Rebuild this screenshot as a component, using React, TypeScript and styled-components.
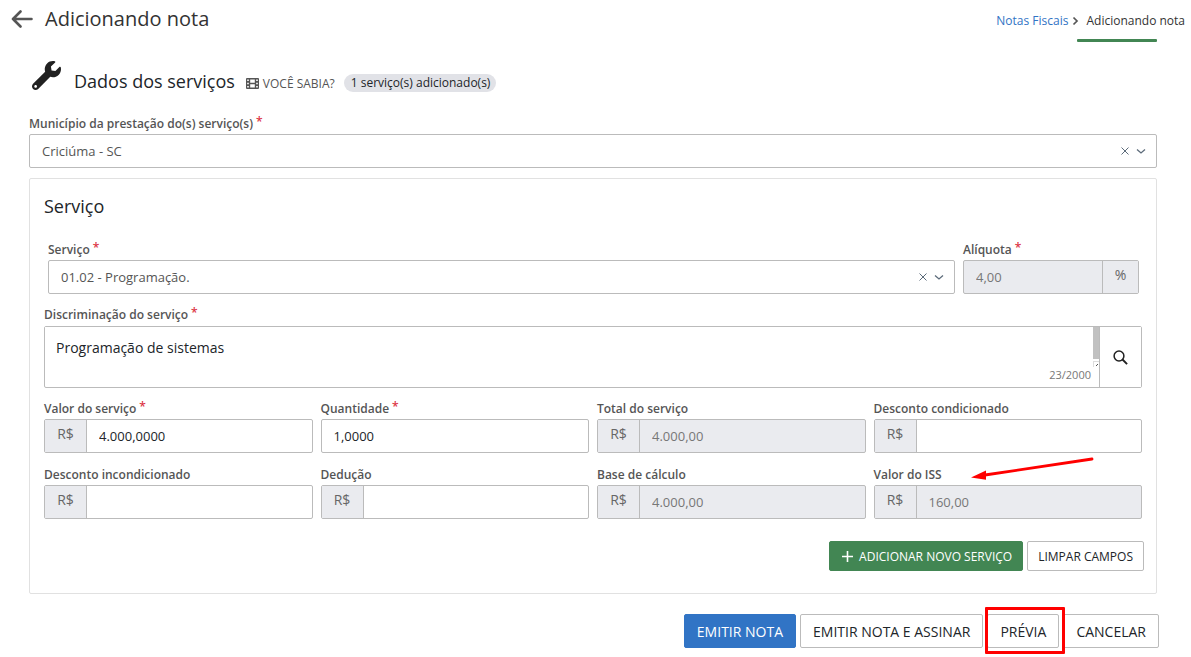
import React from 'react';
import styled, { createGlobalStyle, css } from 'styled-components';
import { FaWrench } from 'react-icons/fa';

const Global = createGlobalStyle`
  *, *::before, *::after { box-sizing: border-box; }
  body { margin: 0; background: #fff; color: #212529; font-family: 'Open Sans', 'Noto Sans', sans-serif; font-size: 14px; }
  button, input, select, textarea { font: inherit; color: inherit; margin: 0; border-radius: 0; }
`;

const BORDER = '#bbbbbb';
const GREY = '#eaebef';

const Header = styled.header`
  display: flex;
  justify-content: space-between;
  align-items: flex-start;
  padding: 6px 6px 0 11px;
  height: 42px;
`;
const TitleGroup = styled.div`
  display: flex;
  align-items: center;
  gap: 12px;
`;
const BackButton = styled.button`
  display: flex;
  padding: 0;
  border: 0;
  background: none;
  color: #555;
  cursor: pointer;
`;
const PageTitle = styled.h1`
  margin: 0;
  font-size: 20px;
  line-height: 26px;
  font-weight: 400;
  color: #333;
`;
const Breadcrumb = styled.nav`
  display: flex;
  flex-direction: column;
  font-size: 12px;
  line-height: 30px;
`;
const Crumbs = styled.div`
  display: flex;
  align-items: center;
  height: 30px;
  color: #333;
  a { color: #3174c5; text-decoration: none; }
  svg { margin: 0 7px 0 4px; color: #555; }
`;
const ActiveBar = styled.div`
  width: 80px;
  height: 3px;
  margin-top: 3px;
  margin-right: 28px;
  align-self: flex-end;
  border-radius: 1px;
  background: #428653;
`;

const Main = styled.main`
  padding: 19px 34px 9px 29px;
`;
const SectionHead = styled.div`
  display: flex;
  align-items: center;
  height: 40px;
  padding-left: 3px;
  margin-bottom: 15px;
`;
const SectionIcon = styled.span`
  display: flex;
  align-self: flex-start;
  margin-right: 13px;
`;
const Heading = styled.h2`
  margin: 0;
  font-size: 18px;
  line-height: 26px;
  font-weight: 400;
`;
const VideoLink = styled.a`
  display: flex;
  align-items: center;
  gap: 4px;
  margin: 4px 9px 0 11px;
  font-size: 12px;
  color: #555;
  text-decoration: none;
`;
const Pill = styled.span`
  padding: 0 6px 0 7px;
  border-radius: 9px;
  background: #e1e2e7;
  font-size: 12px;
  line-height: 18px;
  margin-top: 4px;
`;

const FieldBox = styled.div`
  position: relative;
  min-width: 0;
`;
const Label = styled.label`
  display: block;
  height: 18px;
  font-size: 12px;
  line-height: 16px;
  font-weight: 600;
  color: #555;
  white-space: nowrap;
`;
const Star = styled.span`
  margin-left: 3px;
  color: #dc3545;
  position: relative;
  top: -2px;
`;
const Control = styled.div<{ $grey?: boolean }>`
  display: flex;
  height: 34px;
  border: 1px solid ${BORDER};
  border-radius: 2px;
  background: ${p => (p.$grey ? GREY : '#fff')};
`;
const AddOn = styled.span<{ $end?: boolean }>`
  flex: none;
  width: ${p => (p.$end ? 36 : 42)}px;
  line-height: 28px;
  text-align: center;
  color: #666;
  background: ${GREY};
  ${p => (p.$end ? css`border-left: 1px solid ${BORDER};` : css`border-right: 1px solid ${BORDER};`)}
`;
const Input = styled.input`
  flex: 1;
  min-width: 0;
  width: 100%;
  padding: 0 12px;
  border: 0;
  outline: 0;
  background: transparent;
  font-size: 13px;
  color: #212529;
  &:disabled { color: #777; }
`;
const Select = styled.select`
  flex: 1;
  min-width: 0;
  padding: 0 12px;
  border: 0;
  outline: 0;
  appearance: none;
  background: transparent;
  font-size: 13px;
  color: #555;
`;
const SelectTools = styled.span`
  display: flex;
  align-items: center;
  gap: 6px;
  padding-right: 10px;
  color: #5c6b7a;
`;
const IconButton = styled.button`
  display: flex;
  padding: 0;
  border: 0;
  background: none;
`;

const Panel = styled.section`
  margin-top: 10px;
  padding: 14px 14px 22px;
  border: 1px solid #e1e1e1;
  border-radius: 2px;
`;
const ServiceRow = styled.div`
  display: grid;
  grid-template-columns: 1fr 176px;
  gap: 8px;
  margin: 23px 3px 13px 4px;
`;
const ValueGrid = styled.div`
  display: grid;
  grid-template-columns: repeat(4, minmax(0, 1fr));
  gap: 14px 8px;
  margin-top: 13px;
`;
const AreaControl = styled.div`
  display: flex;
  height: 62px;
  margin-top: 1px;
  border: 1px solid ${BORDER};
  border-radius: 2px;
`;
const AreaBody = styled.div`
  flex: 1;
  display: flex;
  flex-direction: column;
`;
const AreaTop = styled.div`
  display: flex;
  height: 40px;
`;
const TextArea = styled.textarea`
  flex: 1;
  padding: 11px;
  border: 0;
  outline: 0;
  resize: none;
  overflow: hidden;
  font-size: 14px;
  line-height: 20px;
`;
const ScrollTrack = styled.div`
  width: 6px;
  display: flex;
  flex-direction: column;
  justify-content: space-between;
  &::before { content: ''; height: 32px; background: #c1c1c1; }
`;
const Counter = styled.span`
  align-self: flex-end;
  padding-right: 8px;
  font-size: 11px;
  line-height: 16px;
  color: #777;
`;
const SearchButton = styled.button`
  width: 42px;
  display: flex;
  align-items: center;
  justify-content: center;
  border: 0;
  border-left: 1px solid ${BORDER};
  background: #fff;
  padding: 0;
`;
const PanelActions = styled.div`
  display: flex;
  justify-content: flex-end;
  gap: 4px;
  margin: 22px -2px 0 0;
`;
const Footer = styled.footer`
  display: flex;
  justify-content: flex-end;
  gap: 4px;
  margin: 20px -2px 0 0;
`;
const tones = {
  plain: ['#fff', '#212529', BORDER],
  green: ['#428653', '#fff', '#428653'],
  blue: ['#3174c5', '#fff', '#3174c5'],
};
const Button = styled.button<{ $tone?: keyof typeof tones; $small?: boolean }>`
  display: flex;
  align-items: center;
  justify-content: center;
  gap: 6px;
  height: ${p => (p.$small ? 30 : 34)}px;
  padding: 0 ${p => (p.$small ? 10 : 12)}px;
  font-size: ${p => (p.$small ? 12 : 14)}px;
  border: 1px solid ${p => tones[p.$tone ?? 'plain'][2]};
  border-radius: 2px;
  background: ${p => tones[p.$tone ?? 'plain'][0]};
  color: ${p => tones[p.$tone ?? 'plain'][1]};
  white-space: nowrap;
  svg { margin-left: 2px; }
`;
const Highlight = styled.span`
  position: relative;
  &::after {
    content: '';
    position: absolute;
    inset: -7px -6px -6px -2px;
    border: 3px solid #f00;
    border-radius: 1px;
    pointer-events: none;
    z-index: 1;
  }
`;
const ArrowMark = styled.svg`
  position: absolute;
  left: 97px;
  top: -10px;
  pointer-events: none;
`;

type FieldProps = { id: string; label: string; required?: boolean; value?: string; prefix?: string; suffix?: string; disabled?: boolean; children?: React.ReactNode };

const FieldLabel = ({ id, label, required }: { id: string; label: string; required?: boolean }) => (
  <Label htmlFor={id}>{label}{required && <Star>*</Star>}</Label>
);
const Field = ({ id, label, required, value = '', prefix, suffix, disabled, children }: FieldProps) => (
  <FieldBox>
    <FieldLabel id={id} label={label} required={required} />
    <Control $grey={disabled}>
      {prefix && <AddOn>{prefix}</AddOn>}
      <Input id={id} defaultValue={value} disabled={disabled} />
      {suffix && <AddOn $end>{suffix}</AddOn>}
    </Control>
    {children}
  </FieldBox>
);
const SelectField = ({ id, label, value }: { id: string; label: string; value: string }) => (
  <FieldBox>
    <FieldLabel id={id} label={label} required />
    <Control>
      <Select id={id}><option>{value}</option></Select>
      <SelectTools>
        <IconButton type="button" aria-label="Limpar">
          <svg width="10" height="10" viewBox="0 0 10 10" fill="none" stroke="currentColor"><path d="M1.5 1.5l7 7M8.5 1.5l-7 7" /></svg>
        </IconButton>
        <svg width="10" height="10" viewBox="0 0 10 10" fill="none" stroke="currentColor" strokeWidth="1.3"><path d="M1 3.5l4 3.5 4-3.5" /></svg>
      </SelectTools>
    </Control>
  </FieldBox>
);

export default function App() {
  return (
    <>
      <Global />
      <Header>
        <TitleGroup>
          <BackButton type="button" aria-label="Voltar">
            <svg width="22" height="18" viewBox="0 0 22 18" fill="none" stroke="currentColor" strokeWidth="2.6" strokeLinecap="round" strokeLinejoin="round"><path d="M9.5 1.5L2 9l7.500 7.500M2 9h18.500" /></svg>
          </BackButton>
          <PageTitle>Adicionando nota</PageTitle>
        </TitleGroup>
        <Breadcrumb>
          <Crumbs>
            <a href="#notas">Notas Fiscais</a>
            <svg width="7" height="10" viewBox="0 0 7 10" fill="none" stroke="currentColor" strokeWidth="1.7"><path d="M1.500 1.500L5 5 1.500 8.500" /></svg>
            <span>Adicionando nota</span>
          </Crumbs>
          <ActiveBar />
        </Breadcrumb>
      </Header>
      <Main>
        <SectionHead>
          <SectionIcon><FaWrench size={29} color="#212121" /></SectionIcon>
          <Heading>Dados dos serviços</Heading>
          <VideoLink href="#video">
            <svg width="13" height="11" viewBox="0 0 13 11"><path fill="currentColor" fillRule="evenodd" d="M1 0h11a1 1 0 0 1 1 1v9a1 1 0 0 1-1 1H1a1 1 0 0 1-1-1V1a1 1 0 0 1 1-1zM1.200 1.500v1.500h1.600V1.500zM1.200 4.700v1.600h1.600V4.700zM1.200 8v1.500h1.600V8zM10.200 1.500v1.500h1.600V1.500zM10.200 4.700v1.600h1.600V4.700zM10.200 8v1.500h1.600V8zM4.200 1.400v3.400h4.600V1.400zM4.200 6.200v3.400h4.600V6.200z" /></svg>
            VOCÊ SABIA?
          </VideoLink>
          <Pill>1 serviço(s) adicionado(s)</Pill>
        </SectionHead>
        <SelectField id="municipio" label="Município da prestação do(s) serviço(s)" value="Criciúma - SC" />
        <Panel>
          <Heading>Serviço</Heading>
          <ServiceRow>
            <SelectField id="servico" label="Serviço" value="01.02 - Programação." />
            <Field id="aliquota" label="Alíquota" required value="4,00" suffix="%" disabled />
          </ServiceRow>
          <FieldLabel id="discriminacao" label="Discriminação do serviço" required />
          <AreaControl>
            <AreaBody>
              <AreaTop>
                <TextArea id="discriminacao" defaultValue="Programação de sistemas" />
                <ScrollTrack>
                  <svg width="6" height="6" viewBox="0 0 6 6"><path fill="#ddd" d="M0 0h6v1H1v5H0z" /><path stroke="#555" d="M3 5l2-2" /></svg>
                </ScrollTrack>
              </AreaTop>
              <Counter>23/2000</Counter>
            </AreaBody>
            <SearchButton type="button" aria-label="Pesquisar">
              <svg width="15" height="15" viewBox="0 0 15 15" fill="none" stroke="#212121"><circle cx="6" cy="6" r="4.900" strokeWidth="1.500" /><path strokeWidth="1.900" d="M9.500 9.500l4.600 4.600" /></svg>
            </SearchButton>
          </AreaControl>
          <ValueGrid>
            <Field id="valor" label="Valor do serviço" required prefix="R$" value="4.000,0000" />
            <Field id="quantidade" label="Quantidade" required value="1,0000" />
            <Field id="total" label="Total do serviço" prefix="R$" value="4.000,00" disabled />
            <Field id="desc-cond" label="Desconto condicionado" prefix="R$" />
            <Field id="desc-incond" label="Desconto incondicionado" prefix="R$" />
            <Field id="deducao" label="Dedução" prefix="R$" />
            <Field id="base" label="Base de cálculo" prefix="R$" value="4.000,00" disabled />
            <Field id="iss" label="Valor do ISS" prefix="R$" value="160,00" disabled>
              <ArrowMark width="124" height="24" viewBox="0 0 124 24">
                <path d="M121 2L14 18" stroke="#f00" strokeWidth="2.800" strokeLinecap="round" />
                <path d="M0 20.500l15-7v9.300z" fill="#f00" />
              </ArrowMark>
            </Field>
          </ValueGrid>
          <PanelActions>
            <Button type="button" $small $tone="green">
              <svg width="11" height="11" viewBox="0 0 11 11" stroke="currentColor" strokeWidth="1.600"><path d="M5.500 0v11M0 5.500h11" /></svg>
              ADICIONAR NOVO SERVIÇO
            </Button>
            <Button type="button" $small>LIMPAR CAMPOS</Button>
          </PanelActions>
        </Panel>
        <Footer>
          <Button type="button" $tone="blue">EMITIR NOTA</Button>
          <Button type="button">EMITIR NOTA E ASSINAR</Button>
          <Highlight><Button type="button">PRÉVIA</Button></Highlight>
          <Button type="button">CANCELAR</Button>
        </Footer>
      </Main>
    </>
  );
}
